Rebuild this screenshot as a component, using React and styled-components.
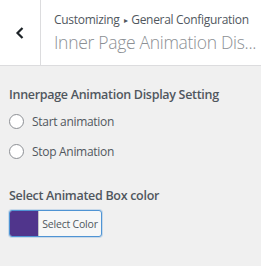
import React from 'react';
import styled, { createGlobalStyle } from 'styled-components';

const GlobalStyle = createGlobalStyle`
  html, body {
    margin: 0;
    padding: 0;
    background: #f0f0f0;
    font-family: "Open Sans", "Noto Sans", sans-serif;
  }
`;

const Panel = styled.div`
  width: 261px;
  height: 266px;
  background: #f0f0f0;
  overflow: hidden;
`;

const Header = styled.div`
  display: flex;
  height: 65px;
  background: #fff;
  border-bottom: 1px solid #dcdcde;
`;

const BackButton = styled.div`
  width: 40px;
  flex: none;
  display: flex;
  align-items: center;
  justify-content: center;
  border-right: 1px solid #dcdcde;
  color: #1d2327;
`;

const HeaderText = styled.div`
  flex: 1;
  min-width: 0;
  padding: 11px 0 0 13px;
`;

const Crumbs = styled.div`
  font-size: 12px;
  line-height: 18px;
  color: #50575e;
  white-space: nowrap;
  letter-spacing: -0.3px;
`;

const CrumbArrow = styled.span`
  font-size: 8px;
  margin: 0 4px;
  vertical-align: 1px;
`;

const Title = styled.div`
  font-size: 17.5px;
  line-height: 26px;
  color: #8c8f94;
  white-space: nowrap;
  font-weight: 300;
  letter-spacing: -0.3px;
`;

const Body = styled.div`
  padding: 20px 9px 0;
`;

const SectionTitle = styled.div`
  font-size: 12.5px;
  font-weight: 600;
  color: #50575e;
  line-height: 18px;
  margin-bottom: ${p => p.$gap}px;
  letter-spacing: -0.3px;
`;

const RadioRow = styled.label`
  display: flex;
  align-items: center;
  gap: 8px;
  height: 30px;
  font-size: 12px;
  color: #50575e;
  letter-spacing: -0.3px;
`;

const RadioCircle = styled.span`
  width: 13px;
  height: 13px;
  border-radius: 50%;
  border: 1px solid #8c8f94;
  background: #fff;
  flex: none;
`;

const RadioGroup = styled.div`
  margin-bottom: 21px;
`;

const ColorButton = styled.div`
  display: flex;
  width: 91px;
  height: 25px;
  border: 1px solid #4f94d4;
  border-radius: 3px;
  overflow: hidden;
  background: #f6f7f7;
  box-shadow: 0 0 0 1px rgba(79, 148, 212, 0.25);
`;

const Swatch = styled.span`
  width: 28px;
  background: ${p => p.$color};
  border-right: 1px solid #c3c4c7;
`;

const ColorLabel = styled.span`
  flex: 1;
  display: flex;
  align-items: center;
  justify-content: center;
  font-size: 10.5px;
  color: #50575e;
  letter-spacing: -0.2px;
`;

const Chevron = () => (
  <svg width="10" height="14" viewBox="0 0 10 14">
    <path d="M7.5 2 L2.5 7 L7.5 12" fill="none" stroke="currentColor" strokeWidth="2.2" />
  </svg>
);

const App = () => {
  return (
    <Panel>
      <GlobalStyle />
      <Header>
        <BackButton><Chevron /></BackButton>
        <HeaderText>
          <Crumbs>Customizing<CrumbArrow>▸</CrumbArrow>General Configuration</Crumbs>
          <Title>Inner Page Animation Dis...</Title>
        </HeaderText>
      </Header>
      <Body>
        <SectionTitle $gap={2}>Innerpage Animation Display Setting</SectionTitle>
        <RadioGroup>
          <RadioRow><RadioCircle />Start animation</RadioRow>
          <RadioRow><RadioCircle />Stop Animation</RadioRow>
        </RadioGroup>
        <SectionTitle $gap={5}>Select Animated Box color</SectionTitle>
        <ColorButton>
          <Swatch $color="#50358c" />
          <ColorLabel>Select Color</ColorLabel>
        </ColorButton>
      </Body>
    </Panel>
  );
};

export default App;
